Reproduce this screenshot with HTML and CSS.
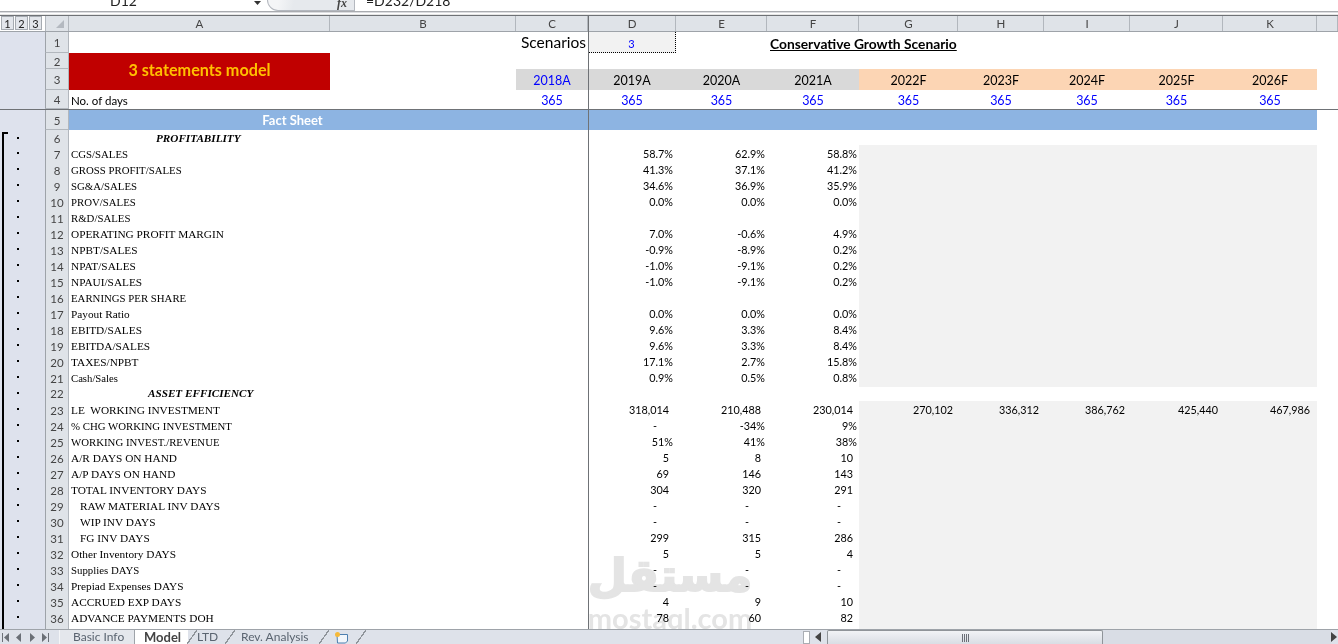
FILE: index.html
```html
<!DOCTYPE html>
<html>
<head>
<meta charset="utf-8">
<title>3 statements model</title>
<link rel="stylesheet" href="styles.css">
</head>
<body>
<div class="app">
  <div class="fxbar">
    <span class="namebox">D12</span>
    <svg class="ddarrow" width="7" height="4" viewBox="0 0 7 4"><path d="M0 0h7L3.500 4z" fill="#333"/></svg>
    <span class="fxtools"><span class="fxicon">fx</span></span>
    <span class="formula">=D232/D218</span>
  </div>
  <div class="sep"></div>
  <div class="sheet">
    <div class="row colhead">
      <span class="levels"><b>1</b><b>2</b><b>3</b></span>
      <span class="corner"><svg width="8" height="8" viewBox="0 0 8 8"><path d="M8 0v8H0z" fill="#b4b9c0"/></svg></span>
      <span>A</span><span>B</span><span>C</span><span>D</span><span>E</span><span>F</span><span>G</span><span>H</span><span>I</span><span>J</span><span>K</span><span></span>
    </div>
    <div class="top">
      <span class="gut g14"></span>
      <span class="hd r1">1</span><span class="hd r2">2</span><span class="hd r3">3</span><span class="hd r4">4</span>
      <span class="scen">Scenarios</span>
      <span class="d1">3</span>
      <span class="title"><u>Conservative Growth Scenario</u></span>
      <div class="banner">3 statements model</div>
      <span class="yr c3 blue">2018A</span><span class="yr c4">2019A</span><span class="yr c5">2020A</span><span class="yr c6">2021A</span>
      <span class="yr f c7">2022F</span><span class="yr f c8">2023F</span><span class="yr f c9">2024F</span><span class="yr f c10">2025F</span><span class="yr f c11">2026F</span>
      <span class="nod">No. of days</span>
      <span class="dd c3">365</span><span class="dd c4">365</span><span class="dd c5">365</span><span class="dd c6">365</span><span class="dd c7">365</span><span class="dd c8">365</span><span class="dd c9">365</span><span class="dd c10">365</span><span class="dd c11">365</span>
    </div>
    <div class="row fact">
      <span class="gut"></span><span class="hd">5</span>
      <span class="facttitle">Fact Sheet</span><span class="factrest"></span>
    </div>
    <div class="row r16 h15"><span class="gut first"><i></i></span><span class="hd">6</span><span class="sec sec1">PROFITABILITY</span></div>
    <div class="row r16"><span class="gut"><i></i></span><span class="hd">7</span><span class="lab tight">CGS/SALES</span><span class="v c4">58.7%</span><span class="v c5">62.9%</span><span class="v c6">58.8%</span><span class="fc"></span></div>
    <div class="row r16"><span class="gut"><i></i></span><span class="hd">8</span><span class="lab tight">GROSS PROFIT/SALES</span><span class="v c4">41.3%</span><span class="v c5">37.1%</span><span class="v c6">41.2%</span><span class="fc"></span></div>
    <div class="row r16"><span class="gut"><i></i></span><span class="hd">9</span><span class="lab tight">SG&amp;A/SALES</span><span class="v c4">34.6%</span><span class="v c5">36.9%</span><span class="v c6">35.9%</span><span class="fc"></span></div>
    <div class="row r16"><span class="gut"><i></i></span><span class="hd">10</span><span class="lab tight">PROV/SALES</span><span class="v c4">0.0%</span><span class="v c5">0.0%</span><span class="v c6">0.0%</span><span class="fc"></span></div>
    <div class="row r16"><span class="gut"><i></i></span><span class="hd">11</span><span class="lab tight">R&amp;D/SALES</span><span class="fc"></span></div>
    <div class="row r16"><span class="gut"><i></i></span><span class="hd">12</span><span class="lab">OPERATING PROFIT MARGIN</span><span class="v c4">7.0%</span><span class="v c5">-0.6%</span><span class="v c6">4.9%</span><span class="fc"></span></div>
    <div class="row r16"><span class="gut"><i></i></span><span class="hd">13</span><span class="lab">NPBT/SALES</span><span class="v c4">-0.9%</span><span class="v c5">-8.9%</span><span class="v c6">0.2%</span><span class="fc"></span></div>
    <div class="row r16"><span class="gut"><i></i></span><span class="hd">14</span><span class="lab">NPAT/SALES</span><span class="v c4">-1.0%</span><span class="v c5">-9.1%</span><span class="v c6">0.2%</span><span class="fc"></span></div>
    <div class="row r16"><span class="gut"><i></i></span><span class="hd">15</span><span class="lab">NPAUI/SALES</span><span class="v c4">-1.0%</span><span class="v c5">-9.1%</span><span class="v c6">0.2%</span><span class="fc"></span></div>
    <div class="row r16"><span class="gut"><i></i></span><span class="hd">16</span><span class="lab tight">EARNINGS PER SHARE</span><span class="fc"></span></div>
    <div class="row r16"><span class="gut"><i></i></span><span class="hd">17</span><span class="lab">Payout Ratio</span><span class="v c4">0.0%</span><span class="v c5">0.0%</span><span class="v c6">0.0%</span><span class="fc"></span></div>
    <div class="row r16"><span class="gut"><i></i></span><span class="hd">18</span><span class="lab">EBITD/SALES</span><span class="v c4">9.6%</span><span class="v c5">3.3%</span><span class="v c6">8.4%</span><span class="fc"></span></div>
    <div class="row r16"><span class="gut"><i></i></span><span class="hd">19</span><span class="lab">EBITDA/SALES</span><span class="v c4">9.6%</span><span class="v c5">3.3%</span><span class="v c6">8.4%</span><span class="fc"></span></div>
    <div class="row r16"><span class="gut"><i></i></span><span class="hd">20</span><span class="lab">TAXES/NPBT</span><span class="v c4">17.1%</span><span class="v c5">2.7%</span><span class="v c6">15.8%</span><span class="fc"></span></div>
    <div class="row r16"><span class="gut"><i></i></span><span class="hd">21</span><span class="lab small">Cash/Sales</span><span class="v c4">0.9%</span><span class="v c5">0.5%</span><span class="v c6">0.8%</span><span class="fc"></span></div>
    <div class="row r16"><span class="gut"><i></i></span><span class="hd">22</span><span class="sec sec2">ASSET EFFICIENCY</span></div>
    <div class="row r16"><span class="gut"><i></i></span><span class="hd">23</span><span class="lab">LE&nbsp; WORKING INVESTMENT</span><span class="v n c4">318,014</span><span class="v n c5">210,488</span><span class="v n c6">230,014</span><span class="v n g c7">270,102</span><span class="v n g c8">336,312</span><span class="v n g c9">386,762</span><span class="v n g c10">425,440</span><span class="v n g c11">467,986</span></div>
    <div class="row r16"><span class="gut"><i></i></span><span class="hd">24</span><span class="lab tight">% CHG WORKING INVESTMENT</span><span class="v dash c4">-</span><span class="v c5">-34%</span><span class="v c6">9%</span><span class="fc"></span></div>
    <div class="row r16"><span class="gut"><i></i></span><span class="hd">25</span><span class="lab tight">WORKING INVEST./REVENUE</span><span class="v c4">51%</span><span class="v c5">41%</span><span class="v c6">38%</span><span class="fc"></span></div>
    <div class="row r16"><span class="gut"><i></i></span><span class="hd">26</span><span class="lab">A/R DAYS ON HAND</span><span class="v n c4">5</span><span class="v n c5">8</span><span class="v n c6">10</span><span class="fc"></span></div>
    <div class="row r16"><span class="gut"><i></i></span><span class="hd">27</span><span class="lab">A/P DAYS ON HAND</span><span class="v n c4">69</span><span class="v n c5">146</span><span class="v n c6">143</span><span class="fc"></span></div>
    <div class="row r16"><span class="gut"><i></i></span><span class="hd">28</span><span class="lab">TOTAL INVENTORY DAYS</span><span class="v n c4">304</span><span class="v n c5">320</span><span class="v n c6">291</span><span class="fc"></span></div>
    <div class="row r16"><span class="gut"><i></i></span><span class="hd">29</span><span class="lab ind">RAW MATERIAL INV DAYS</span><span class="v dash c4">-</span><span class="v dash c5">-</span><span class="v dash c6">-</span><span class="fc"></span></div>
    <div class="row r16"><span class="gut"><i></i></span><span class="hd">30</span><span class="lab ind">WIP INV DAYS</span><span class="v dash c4">-</span><span class="v dash c5">-</span><span class="v dash c6">-</span><span class="fc"></span></div>
    <div class="row r16"><span class="gut"><i></i></span><span class="hd">31</span><span class="lab ind">FG INV DAYS</span><span class="v n c4">299</span><span class="v n c5">315</span><span class="v n c6">286</span><span class="fc"></span></div>
    <div class="row r16"><span class="gut"><i></i></span><span class="hd">32</span><span class="lab">Other Inventory DAYS</span><span class="v n c4">5</span><span class="v n c5">5</span><span class="v n c6">4</span><span class="fc"></span></div>
    <div class="row r16"><span class="gut"><i></i></span><span class="hd">33</span><span class="lab tight">Supplies DAYS</span><span class="v dash c4">-</span><span class="v dash c5">-</span><span class="v dash c6">-</span><span class="fc"></span></div>
    <div class="row r16"><span class="gut"><i></i></span><span class="hd">34</span><span class="lab">Prepiad Expenses DAYS</span><span class="v dash c4">-</span><span class="v dash c5">-</span><span class="v dash c6">-</span><span class="fc"></span></div>
    <div class="row r16"><span class="gut"><i></i></span><span class="hd">35</span><span class="lab">ACCRUED EXP DAYS</span><span class="v n c4">4</span><span class="v n c5">9</span><span class="v n c6">10</span><span class="fc"></span></div>
    <div class="row r16"><span class="gut"><i></i></span><span class="hd">36</span><span class="lab">ADVANCE PAYMENTS DOH</span><span class="v c4 p4">78</span><span class="v c5 p4">60</span><span class="v c6 p4">82</span><span class="fc"></span></div>
    <div class="row r16"><span class="gut"></span><span class="hd last"></span><span class="fc"></span></div>
    <div class="freeze-v"></div>
    <div class="watermark"><span class="wm-ar" lang="ar" dir="rtl">مستقل</span><span class="wm-en">mostaql.com</span></div>
  </div>
  <div class="tabbar">
    <span class="nav">
      <svg width="10" height="9" viewBox="0 0 10 9"><path d="M1 0h1v9H1zM8 0v9L3 4.500z" fill="#6a6f76"/></svg>
      <svg width="10" height="9" viewBox="0 0 10 9"><path d="M7 0v9L2 4.500z" fill="#6a6f76"/></svg>
      <svg width="10" height="9" viewBox="0 0 10 9"><path d="M3 0v9l5-4.500z" fill="#6a6f76"/></svg>
      <svg width="10" height="9" viewBox="0 0 10 9"><path d="M2 0v9l5-4.500zM8 0h1v9H8z" fill="#6a6f76"/></svg>
    </span>
    <span class="tab t1">Basic Info</span>
    <span class="tab active">Model</span>
    <span class="tab t3">LTD</span>
    <span class="tab t4">Rev. Analysis</span>
    <span class="tab t5"><svg width="15" height="13" viewBox="0 0 15 13"><path d="M3 3.500h10.500v6.500l-2 2h-8z" fill="#f2f6fb" stroke="#4d7fb0"/><circle cx="3.500" cy="3.500" r="2.500" fill="#f5b93a"/></svg></span>
    <span class="tabfill"></span>
    <span class="splitter"></span>
    <svg class="hleft" width="7" height="10" viewBox="0 0 7 10"><path d="M6 0v10L0 5z" fill="#444"/></svg>
    <span class="thumb"><i></i></span>
    <span class="track"></span>
    <svg class="hright" width="7" height="10" viewBox="0 0 7 10"><path d="M0 0v10l6-5z" fill="#444"/></svg>
  </div>
</div>
</body>
</html>
```
FILE: styles.css
```css
* { box-sizing: border-box; }
html, body { margin: 0; padding: 0; background: #fff; overflow: hidden; }
.app { width: 1338px; height: 644px; display: flex; flex-direction: column; overflow: hidden; font-family: "Lato", "Liberation Sans", sans-serif; color: #000; }

/* formula bar */
.fxbar { height: 11px; display: flex; align-items: flex-end; overflow: hidden; background: #fff; flex: none; }
.namebox { width: 254px; padding-left: 110px; font-size: 14px; line-height: 16px; margin-bottom: 2px; color: #222; flex: none; }
.ddarrow { margin: 0 6px 6px 0; flex: none; }
.fxtools { width: 88px; height: 11px; flex: none; display: flex; justify-content: flex-end; background: linear-gradient(100deg, #f4f5f7 0 12%, #e6e9ed 30%); border-left: 1px solid #b4b8bf; border-bottom: 1px solid #b4b8bf; border-right: 1px solid #b4b8bf; border-radius: 0 0 0 11px; }
.fxicon { width: 17px; font: italic bold 12px/6px "Liberation Serif", serif; color: #444; }
.formula { padding-left: 11px; font-size: 14px; line-height: 16px; margin-bottom: 2px; color: #222; white-space: nowrap; flex: 1; }
.sep { height: 4px; flex: none; border-top: 1px solid #a9abaf; border-bottom: 1px solid #e6e6e6; box-shadow: inset 0 1px 0 #dcdde0; background: #fff; }

/* sheet */
.sheet { position: relative; flex: 1; min-height: 0; overflow: hidden; border-top: 1px solid #6f7276; background: #fff; }
.row, .top { display: grid; grid-template-columns: 45px 24px 261px 186px 72px 88px 91px 92px 99px 86px 86px 93px 94px 21px; }
.colhead { height: 16px; background: #dfe3e8; font-size: 11.500px; line-height: 15px; color: #444; text-align: center; border-bottom: 1px solid #9ea3a9; }
.colhead > span { border-right: 1px solid #b2b7bd; padding-left: 1px; }
.colhead .levels { display: flex; align-items: center; gap: 1px; padding-left: 1px; background: #fff; border-right: 0; border-bottom: 1px solid #fff; }
.levels b { width: 13px; height: 14px; font-weight: 400; font-size: 11px; line-height: 13px; color: #222; background: #e3e6eb; border: 1px solid #a6abb1; }
.colhead .corner { display: flex; align-items: flex-end; justify-content: flex-end; padding: 0 4px 3px 0; border-left: 1px solid #b2b7bd; }

.top { grid-template-rows: 21px 16px 21px 19px; height: 78px; border-bottom: 1px solid #6f7276; }
.gut { background: #dee2ed; display: block; position: relative; }
.g14 { grid-row: 1 / 5; grid-column: 1; }
.hd { grid-column: 2; background: #dfe3e8; color: #444; font-size: 11.500px; text-align: center; border: 1px solid #b2b7bd; border-top: 0; border-left-color: #9ea3a9; display: flex; align-items: center; justify-content: center; padding-top: 1px; }
.hd.last { border-bottom: 0; }
.r1 { grid-row: 1; } .r2 { grid-row: 2; } .r3 { grid-row: 3; } .r4 { grid-row: 4; }
.scen { grid-column: 5; grid-row: 1; font-size: 15.500px; line-height: 21px; text-align: right; padding-right: 2px; white-space: nowrap; }
.d1 { grid-column: 6; grid-row: 1; background: #f2f2f2; color: #00f; font-size: 11px; line-height: 23px; text-align: center; border-right: 1px dotted #000; border-bottom: 1px dotted #000; }
.title { grid-column: 8 / 10; grid-row: 1; font-size: 13.800px; font-weight: 700; line-height: 23px; padding-left: 3px; white-space: nowrap; text-align: left; }
.banner { grid-column: 3; grid-row: 2 / 4; background: #c00000; color: #ffc000; font-size: 16.200px; font-weight: 700; display: flex; align-items: center; justify-content: center; padding-bottom: 4px; }
.yr { grid-row: 3; background: #d9d9d9; font-size: 12.500px; line-height: 23px; text-align: center; }
.yr.f { background: #fcd5b4; }
.blue { color: #00f; }
.nod { grid-column: 3; grid-row: 4; font-size: 11.500px; line-height: 21px; padding-left: 2px; }
.dd { grid-row: 4; color: #00f; font-size: 12.500px; line-height: 21px; text-align: center; }
.c3 { grid-column: 5; } .c4 { grid-column: 6; } .c5 { grid-column: 7; } .c6 { grid-column: 8; } .c7 { grid-column: 9; } .c8 { grid-column: 10; } .c9 { grid-column: 11; } .c10 { grid-column: 12; } .c11 { grid-column: 13; }

.fact { height: 20px; }
.facttitle { grid-column: 3 / 5; background: #8db4e2; color: #fff; font-size: 13px; font-weight: 700; line-height: 20px; text-align: center; }
.factrest { grid-column: 5 / 14; background: #8db4e2; }

.r16 { height: 16px; }
.h15 { height: 15px; }
.r16 .gut i { position: absolute; left: 17px; top: 7px; width: 2px; height: 2px; background: #000; }
.r16 .gut::before { content: ""; position: absolute; left: 2px; top: 0; bottom: 0; width: 2px; background: #000; }
.r16 .gut.first::before { top: 2px; }
.r16 .gut.first::after { content: ""; position: absolute; left: 2px; top: 2px; width: 6px; height: 2px; background: #000; }
.lab { grid-column: 3 / 5; font: 11.300px/18px "Liberation Serif", serif; padding-left: 2px; white-space: pre; }
.lab.tight { font-size: 10.800px; }
.lab.small { font-size: 10.700px; }
.lab.ind { padding-left: 11px; }
.sec { grid-column: 3 / 5; font: italic bold 11.200px/17px "Liberation Serif", serif; }
.sec1 { padding-left: 87px; }
.sec2 { padding-left: 79px; }
.v { font-size: 10.800px; line-height: 18px; text-align: right; padding-right: 2px; white-space: nowrap; }
.v.c4 { margin-right: 1px; }
.v.n { padding-right: 6px; }
.v.p4 { padding-right: 6px; }
.v.dash { padding-right: 18px; }
.v.g { background: #f2f2f2; padding-right: 5px; }
.v.g.c11 { padding-right: 7px; }
.fc { grid-column: 9 / 14; background: #f2f2f2; }

.freeze-v { position: absolute; left: 588px; top: 0; bottom: 0; width: 1px; background: #6f7276; }
.watermark { position: absolute; left: 585px; top: 531px; width: 170px; height: 84px; display: flex; flex-direction: column; align-items: center; color: #e4e4e4; mix-blend-mode: multiply; pointer-events: none; }
.wm-ar { font: 700 45px/58px "DejaVu Sans", sans-serif; -webkit-text-stroke: 2px #e4e4e4; white-space: nowrap; }
.wm-en { font: 700 29px/26px "Lato", sans-serif; }

/* tabs */
.tabbar { height: 15px; flex: none; display: flex; align-items: stretch; background: #dee2ea; border-top: 1px solid #9ea3a9; font-size: 12px; line-height: 14px; color: #5a6470; }
.nav { width: 59px; display: flex; align-items: center; gap: 3px; padding-left: 1px; flex: none; }
.tab { flex: none; position: relative; white-space: nowrap; }
.tab::after { content: ""; position: absolute; right: -9px; top: 0; bottom: 0; width: 10px; background: linear-gradient(to top left, transparent calc(50% - .6px), #8f949a calc(50% - .6px), #8f949a calc(50% + .6px), transparent calc(50% + .6px)); }
.t1 { width: 76px; padding-left: 13px; border-left: 1px solid #f4f5f7; border-right: 1px solid #9ea3a9; background: #e4e7ec; }
.t1::after { display: none; }
.tab.active { width: 53px; background: #fff; color: #444; font-size: 13px; font-weight: 700; padding-left: 9px; }
.t3 { width: 38px; padding-left: 9px; }
.t4 { width: 94px; padding-left: 15px; }
.t5 { width: 37px; padding-left: 14px; display: flex; align-items: center; }
.tabfill { width: 446px; flex: none; }
.splitter { width: 7px; flex: none; background: #fff; border: 1px solid #a9adb3; margin-top: 1px; }
.hleft { margin: 2px 5px 0 5px; flex: none; }
.thumb { width: 276px; flex: none; background: linear-gradient(#f1f3f6, #d9dde4); border: 1px solid #8f9499; border-bottom: 0; display: flex; align-items: center; justify-content: center; border-radius: 2px 2px 0 0; }
.thumb i { width: 7px; height: 8px; background: repeating-linear-gradient(90deg, #6b7078 0 1px, transparent 1px 2px); }
.track { flex: 1; background: #d9dde5; }
.hright { margin: 2px 0 0 0; flex: none; }
```
